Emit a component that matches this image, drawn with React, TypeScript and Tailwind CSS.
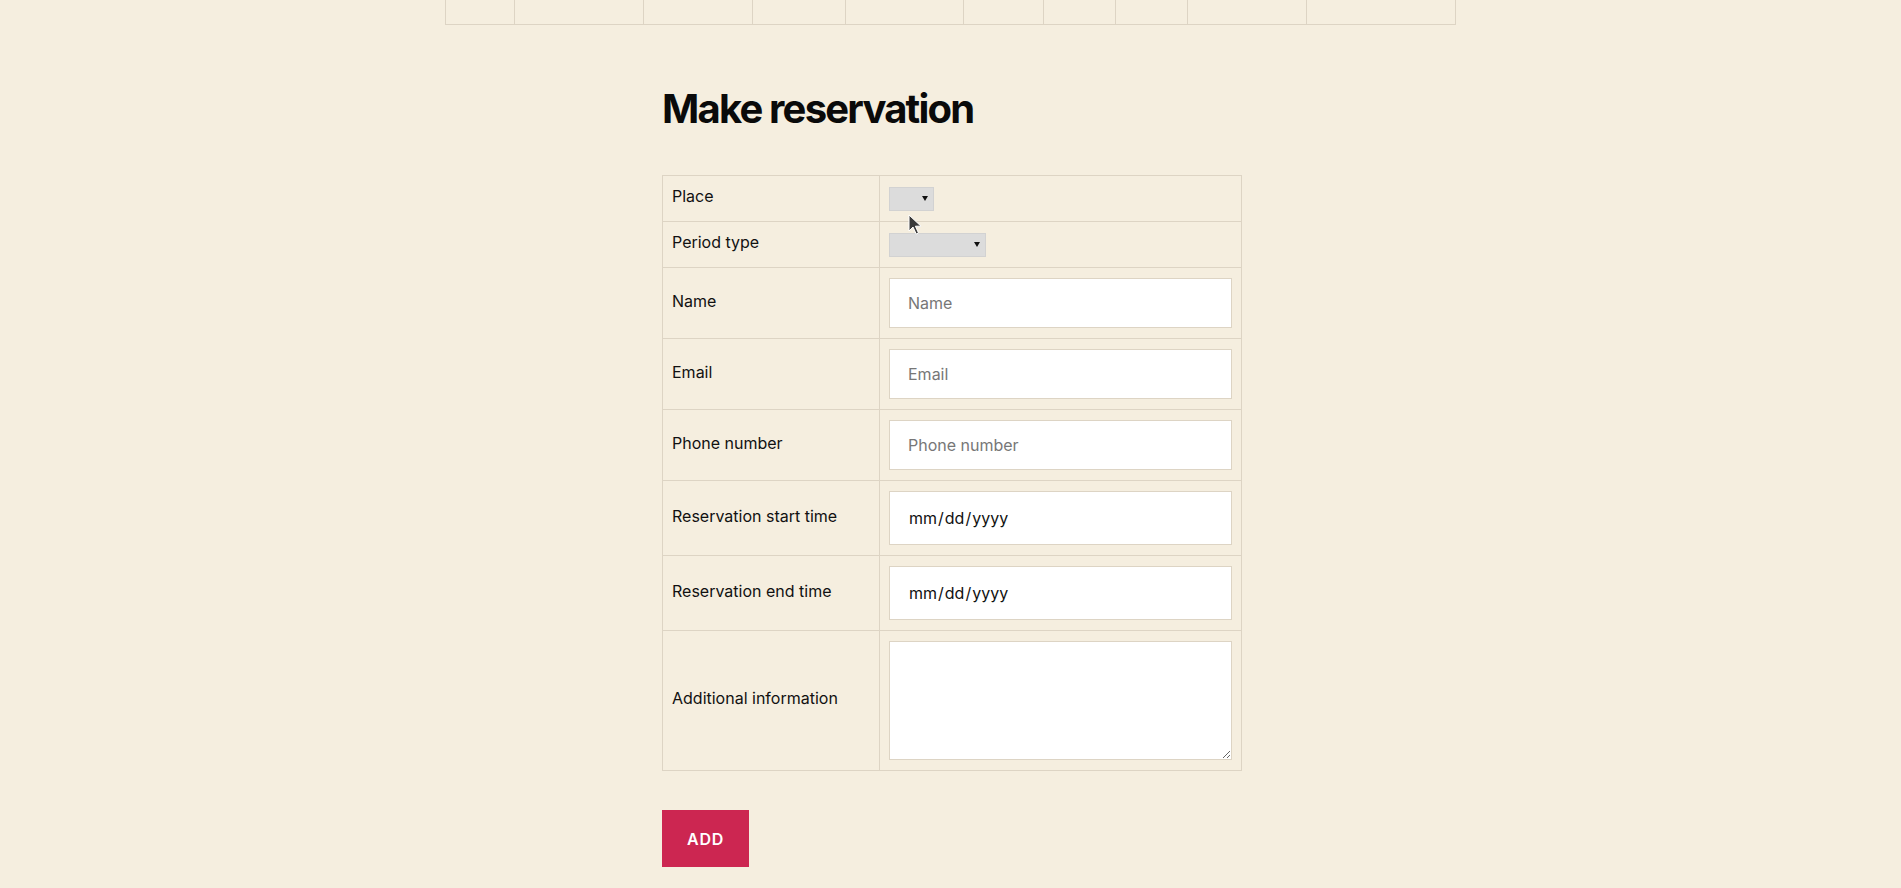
import type { ReactNode } from "react";

const prevCells = Array.from({ length: 10 });

function SelectBox({ width }: { width: string }) {
  return (
    <div className={`relative ${width}`}>
      <select className="block h-[24px] w-full appearance-none border border-[#d2d2d2] bg-[#dcdcdc] outline-none" />
      {/* arrow */}
      <svg
        viewBox="0 0 6 5"
        className="pointer-events-none absolute right-[6px] top-[9px] h-[5px] w-[6px]"
      >
        <path d="M0 0h6L3 5z" fill="#111" />
      </svg>
    </div>
  );
}

function Row({ label, children }: { label: string; children: ReactNode }) {
  return (
    <>
      <div className="flex items-center border-r border-b border-[#ddd4c4] px-[9px] py-[10px]">
        <span className="relative -top-[2px] text-[16px] leading-[25px] text-[#111]">
          {label}
        </span>
      </div>
      <div className="flex items-center border-r border-b border-[#ddd4c4] px-[9px] py-[10px]">
        {children}
      </div>
    </>
  );
}

const inputCls =
  "block w-full border border-[#ddd4c4] bg-white px-[18px] text-[16px] text-[#111] outline-none placeholder:text-[#777]";

export default function App() {
  return (
    <div className="min-h-screen w-full bg-[#f5eedf] font-[family-name:Inter,sans-serif] text-[#111]">
      <div className="mx-auto w-[1011px]">
        {/* previous table (bottom of it) */}
        <div className="grid h-[25px] grid-cols-[69px_129px_109px_93px_118px_80px_72px_72px_119px_149px] border-b border-l border-[#ddd4c4]">
          {prevCells.map((_, i) => (
            <div key={i} className="border-r border-[#ddd4c4]" />
          ))}
        </div>

        {/* form */}
        <section className="ml-[217px] w-[580px] pb-[20px]">
          <h1 className="mt-[59px] text-[40px] font-bold leading-[50px] tracking-[-0.045em] text-[#0a0a0a]">
            Make reservation
          </h1>

          <div className="relative mt-[41px] grid grid-cols-[217px_1fr] border-t border-l border-[#ddd4c4]">
            <Row label="Place">
              <SelectBox width="w-[45px]" />
            </Row>
            <Row label="Period type">
              <SelectBox width="w-[97px]" />
            </Row>
            <Row label="Name">
              <input type="text" placeholder="Name" className={`${inputCls} h-[50px]`} />
            </Row>
            <Row label="Email">
              <input type="email" placeholder="Email" className={`${inputCls} h-[50px]`} />
            </Row>
            <Row label="Phone number">
              <input type="tel" placeholder="Phone number" className={`${inputCls} h-[50px]`} />
            </Row>
            <Row label="Reservation start time">
              <input
                type="date"
                className={`${inputCls} h-[54px] [&::-webkit-calendar-picker-indicator]:hidden`}
              />
            </Row>
            <Row label="Reservation end time">
              <input
                type="date"
                className={`${inputCls} h-[54px] [&::-webkit-calendar-picker-indicator]:hidden`}
              />
            </Row>
            <Row label="Additional information">
              <textarea className="block h-[119px] w-full border border-[#ddd4c4] bg-white px-[18px] py-[10px] text-[16px] outline-none" />
            </Row>

            {/* mouse pointer */}
            <svg
              viewBox="0 0 13 22"
              className="pointer-events-none absolute left-[245px] top-[38px] h-[22px] w-[13px]"
            >
              <path
                d="M1 1v16l4-4 3.2 7 2.3-1-3.1-6.8H13z"
                fill="#3a3a3a"
                stroke="#fff"
                strokeWidth="1"
                strokeLinejoin="round"
              />
            </svg>
          </div>

          <button
            type="button"
            className="mt-[39px] h-[57px] bg-[#cc2651] px-[25px] text-[16px] font-semibold tracking-[0.05em] text-white"
          >
            ADD
          </button>
        </section>
      </div>
    </div>
  );
}
